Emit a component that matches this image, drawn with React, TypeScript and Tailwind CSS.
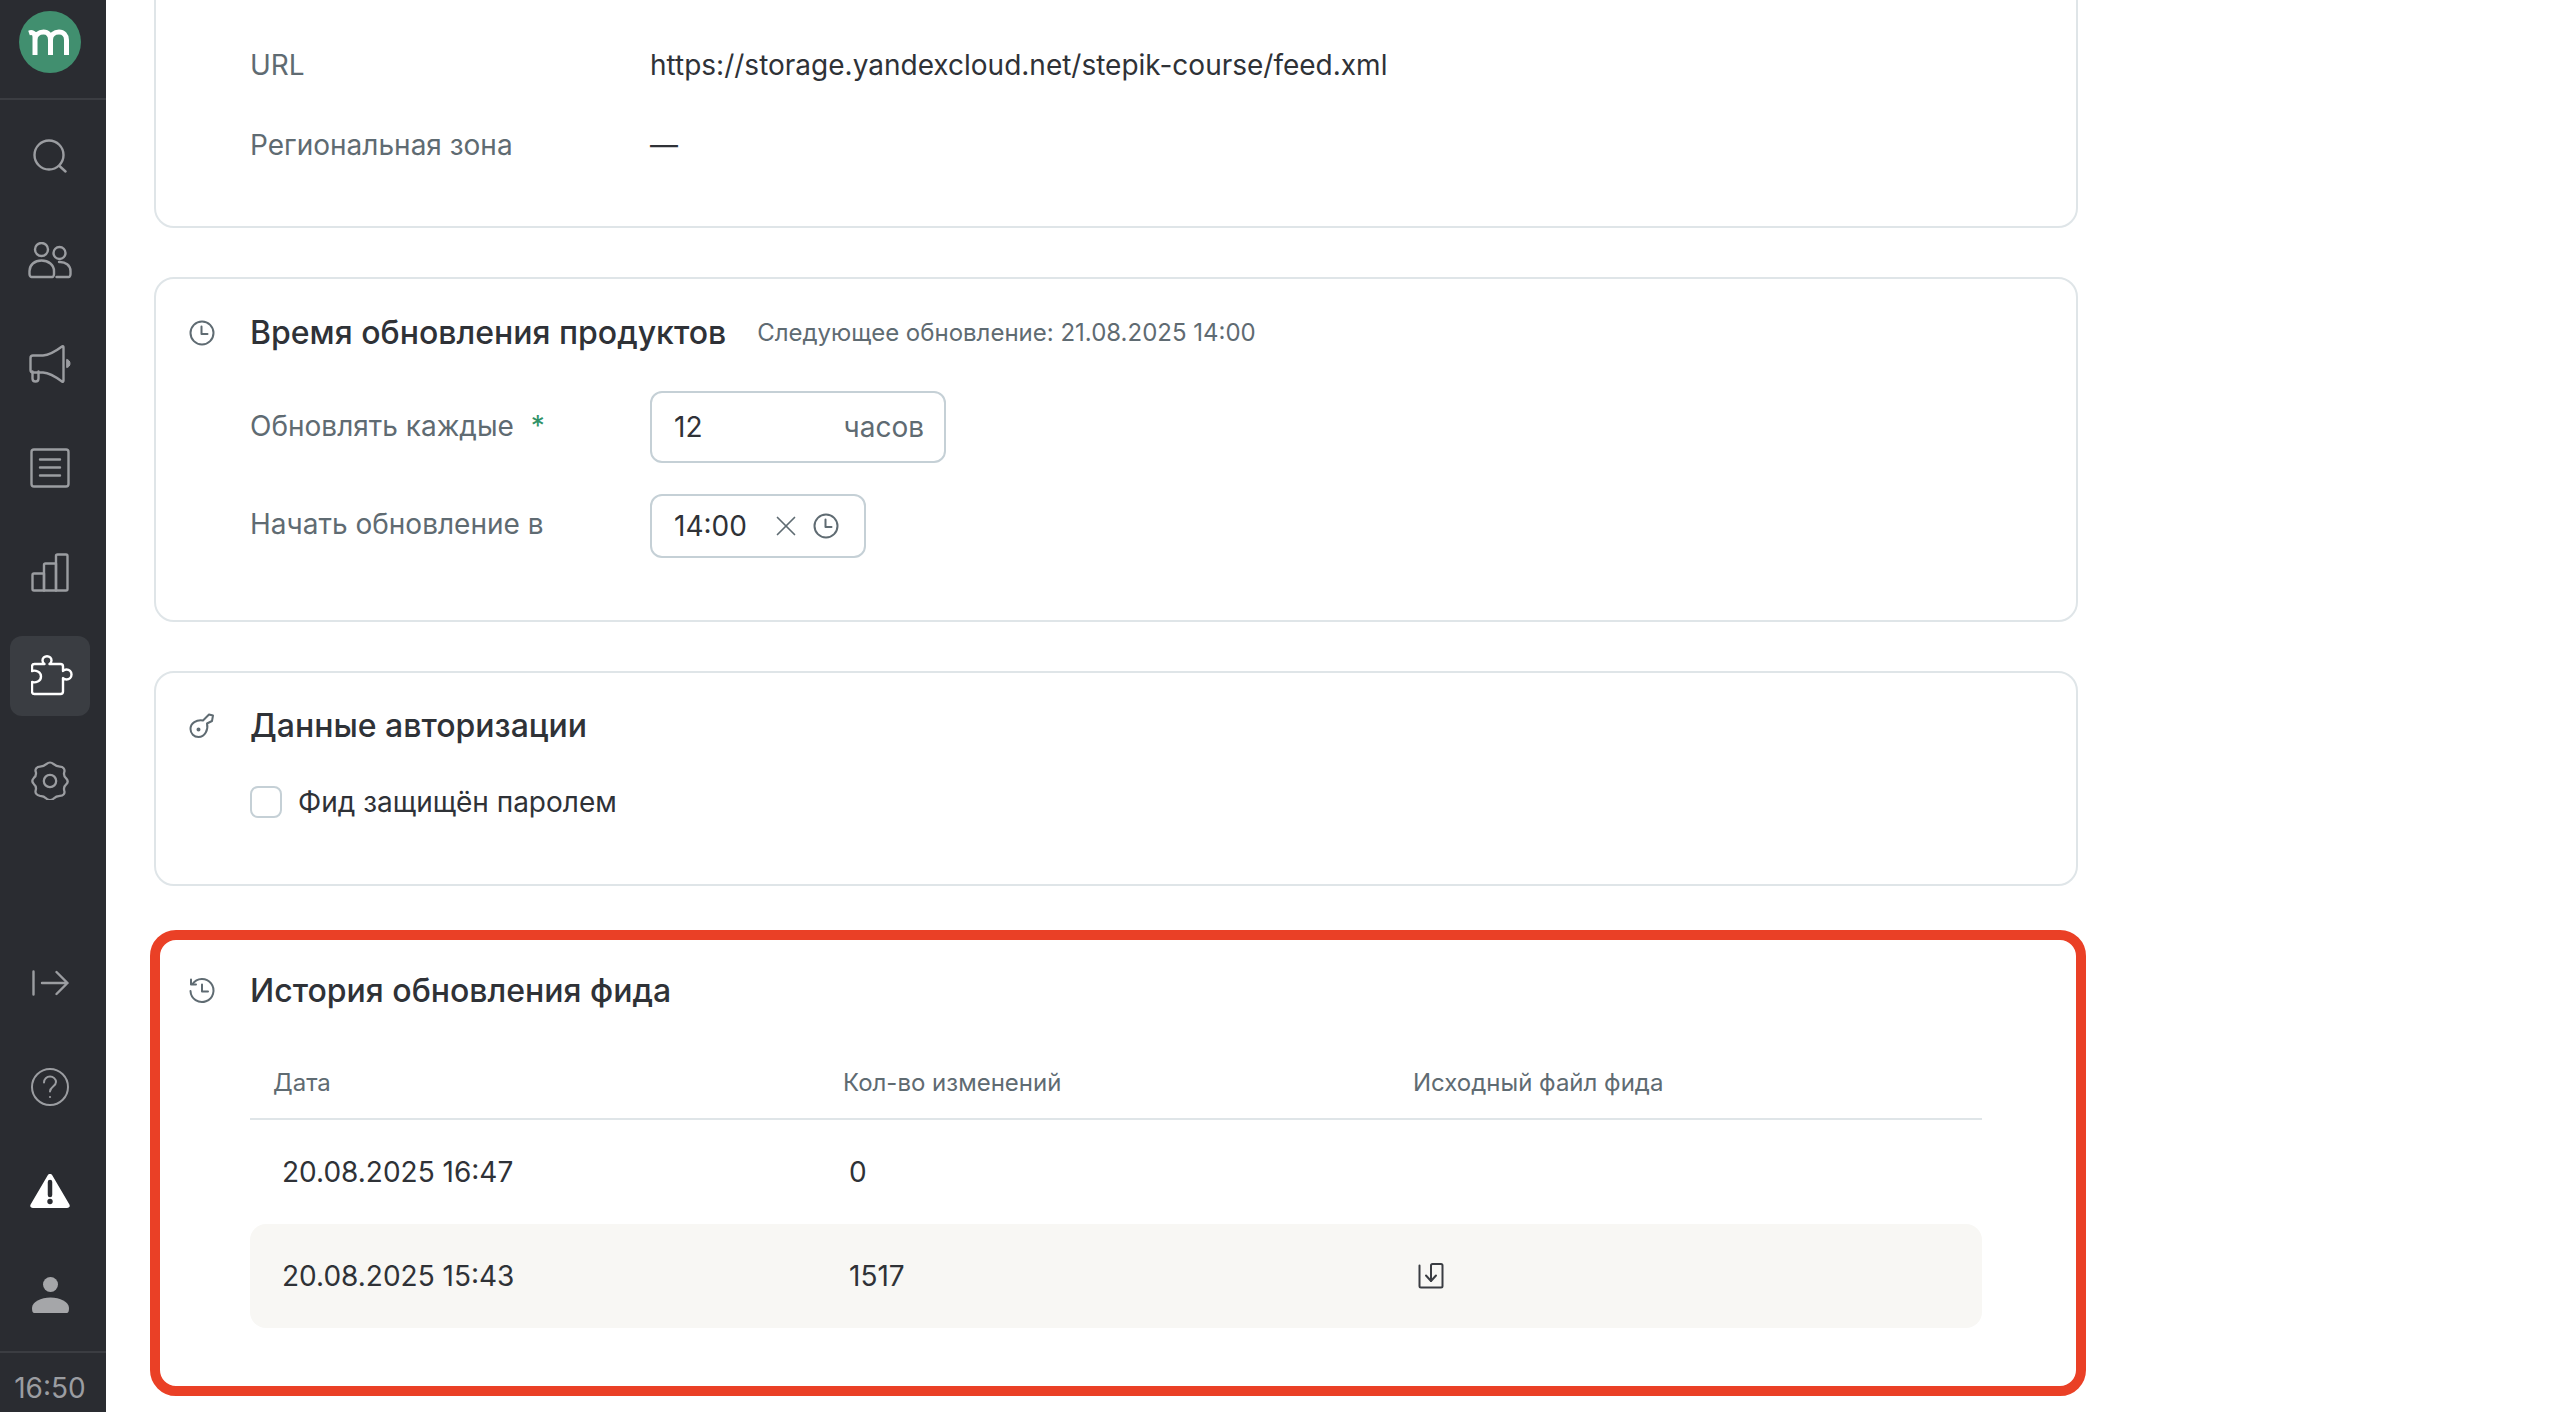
import type { ReactNode } from "react";
import { X } from "lucide-react";

const stroke = "#9b9da1";

const SearchIcon = () => (
  <svg width="34" height="34" viewBox="0 0 34 34" fill="none" stroke={stroke} strokeWidth="2.4" strokeLinecap="round">
    <circle cx="16" cy="16" r="14.5" />
    <path d="M26.5 27l6 5.500" />
  </svg>
);

const UsersIcon = () => (
  <svg width="44" height="37" viewBox="0 0 44 37" fill="none" stroke={stroke} strokeWidth="2.4" strokeLinejoin="round" strokeLinecap="round">
    <circle cx="13.500" cy="7.500" r="6.500" />
    <circle cx="31.500" cy="11" r="6" />
    <path d="M1.500 32v-3c0-6 5-10.500 12-10.500s12.500 4.500 12.500 10.500v3c0 1-.6 3-1.500 3h-21C2.100 35 1.500 33 1.500 32z" />
    <path d="M31 20c6.500-.5 11.500 3.500 11.500 9v3c0 1-.6 3-1.500 3H28.500" />
  </svg>
);

const MegaphoneIcon = () => (
  <svg width="42" height="38" viewBox="0 0 42 38" fill="none" stroke={stroke} strokeWidth="2.4" strokeLinejoin="round" strokeLinecap="round">
    <path d="M1.500 13c0-1.500 1-2.500 2.500-2.500h10C21 10 27 6 33 1.500c.8-.6 1.500-.2 1.500 1v33c0 1.200-.7 1.600-1.500 1-6-4.500-12-8.500-19-9H4c-1.500 0-2.500-1-2.500-2.500z" />
    <path d="M3.500 26.500v7c0 2 1.200 3 3 3s3-1 3-3v-7" />
    <path d="M38 14.500c2 .5 3 2 3 4s-1 3.500-3 4z" fill={stroke} strokeWidth="1" />
  </svg>
);

const ListIcon = () => (
  <svg width="40" height="40" viewBox="0 0 40 40" fill="none" stroke={stroke} strokeWidth="2.4" strokeLinecap="round">
    <rect x="1.500" y="1.500" width="37" height="37" rx="2.500" />
    <path d="M10 11.500h20M10 19.500h20M10 27.500h20" />
  </svg>
);

const ChartIcon = () => (
  <svg width="38" height="39" viewBox="0 0 38 39" fill="none" stroke={stroke} strokeWidth="2.400" strokeLinejoin="round">
    <path d="M13 37.500H3c-1 0-1.500-.6-1.500-1.500V22c0-1 .5-1.500 1.500-1.500h10z" />
    <path d="M13 37.500V12c0-1 .5-1.500 1.500-1.500H25v27z" />
    <path d="M25 37.500V3c0-1 .5-1.500 1.500-1.500H35c1 0 1.500.5 1.500 1.500v33c0 1-.5 1.500-1.500 1.500z" />
  </svg>
);

const PuzzleIcon = () => (
  <svg className="ml-[4px]" width="42" height="42" viewBox="0 0 42 42" fill="none" stroke="#fff" strokeWidth="2.400" strokeLinejoin="round">
    <path d="M3.500 9h10c-1.500-1-2-2.500-2-3.500 0-2.500 2-4.300 4.500-4.300s4.500 1.800 4.500 4.300c0 1-.5 2.500-2 3.500h11c1.500 0 2.500 1 2.500 2.500V16c1-1 2.300-1.500 3.500-1.500 2.700 0 5 2 5 5s-2.300 5-5 5c-1.200 0-2.500-.5-3.500-1.500v13.500c0 1.500-1 2.500-2.500 2.500H3.500C2 39 1 38 1 36.500V27c3.500 1 9-.5 9-5.500S4.500 15 1 16v-4.500C1 10 2 9 3.500 9z" />
  </svg>
);

const GearIcon = () => (
  <svg width="38" height="39" viewBox="0 0 40 41" fill="none" stroke={stroke} strokeWidth="2.400" strokeLinejoin="round">
    <path d="M16.500 3c2-1.800 5-1.800 7 0 2 1.800 4 2.800 7 2.800 3.500 0 5.500 3 4.500 6-.7 2.500 0 4.800 2 6.500 2 2 2 4.400 0 6.400-2 1.700-2.700 4-2 6.500 1 3-1 5.500-4.500 5.500-3 0-5 1-7 3-2 1.800-5 1.800-7 0-2-2-4-3-7-3C6 36.200 4 33.700 5 30.700c.7-2.500 0-4.800-2-6.500-2-2-2-4.400 0-6.400 2-1.700 2.700-4 2-6.500C4 8.800 6 5.800 9.500 5.800c3 0 5-1 7-2.800z" />
    <circle cx="20" cy="21" r="6.500" />
  </svg>
);

const ExitIcon = () => (
  <svg width="37" height="26" viewBox="0 0 37 26" fill="none" stroke={stroke} strokeWidth="2.400" strokeLinecap="round" strokeLinejoin="round">
    <path d="M1.500 1.500v23M10 13h25.500M24.500 2l11 11-11 11" />
  </svg>
);

const HelpIcon = () => (
  <svg width="38" height="38" viewBox="0 0 38 38" fill="none" stroke={stroke} strokeWidth="2" strokeLinecap="round">
    <circle cx="19" cy="19" r="18" />
    <path d="M13 14.500c0-3.500 2.700-6 6-6s6 2.500 6 5.500c0 4.500-6 4.500-6 9.500" />
    <circle cx="19" cy="29" r="1.100" fill={stroke} stroke="none" />
  </svg>
);

const WarnIcon = () => (
  <svg width="40" height="34" viewBox="0 0 40 34" fill="none">
    <path d="M17.600 1.500c1.100-1.900 3.700-1.900 4.800 0l17 29c1 1.800-.2 3.500-2.400 3.500H3c-2.200 0-3.400-1.700-2.400-3.500z" fill="#fff" />
    <path d="M20 8v13" stroke="#2a2c31" strokeWidth="4.500" strokeLinecap="round" />
    <circle cx="20" cy="27.500" r="2.700" fill="#2a2c31" />
  </svg>
);

const PersonIcon = () => (
  <svg width="37" height="36" viewBox="0 0 37 36" fill="#a5a6a9">
    <circle cx="18.500" cy="7.500" r="7.500" />
    <path d="M0 31c0-6 9-10.500 18.500-10.500S37 25 37 31c0 3-.5 5-2.500 5h-32C.5 36 0 34 0 31z" />
  </svg>
);

const ClockIcon = ({ size = 26 }: { size?: number }) => (
  <svg width={size} height={size} viewBox="0 0 26 26" fill="none" stroke="#5f6b72" strokeWidth="2" strokeLinecap="round" strokeLinejoin="round">
    <circle cx="13" cy="13" r="11.500" />
    <path d="M12.500 6.500v7.500h6" />
  </svg>
);

const KeyIcon = () => (
  <svg width="26" height="26" viewBox="0 0 26 26" fill="none" stroke="#5f6b72" strokeWidth="2" strokeLinejoin="round" strokeLinecap="round">
    <path d="M14 7.500L20 1.500l4 1-1 5.500-5 2.500c1.500 6-2 13.500-8.500 13.500C5 24 1.500 20.500 1.500 16c0-6 6-9.500 12.500-8.500z" />
    <circle cx="9.500" cy="16.500" r="1" fill="#5f6b72" />
  </svg>
);

const HistoryIcon = () => (
  <svg width="28" height="28" viewBox="0 0 28 28" fill="none" stroke="#5f6b72" strokeWidth="2" strokeLinecap="round" strokeLinejoin="round">
    <path d="M4.500 7A11.500 11.500 0 1 1 2.500 14" />
    <path d="M3 2.500V7.500h5" />
    <path d="M14 7.500v7h6" />
  </svg>
);

const FileDownIcon = () => (
  <svg width="26" height="26" viewBox="0 0 26 26" fill="none" stroke="#3a3d42" strokeWidth="2" strokeLinecap="round" strokeLinejoin="round">
    <path d="M1.500 2.500V23c0 1 .5 1.500 1.500 1.500h20c1 0 1.500-.5 1.500-1.500V2.500c0-1-.5-1.500-1.500-1.500h-8.500c-1 0-1.500.5-1.500 1.500V18" />
    <path d="M8 12.500l5 5.500 5-5.500" />
  </svg>
);

const navTop = [
  { icon: <SearchIcon /> },
  { icon: <UsersIcon /> },
  { icon: <MegaphoneIcon /> },
  { icon: <ListIcon /> },
  { icon: <ChartIcon /> },
  { icon: <PuzzleIcon />, active: true },
  { icon: <GearIcon /> },
];

const navBottom = [<ExitIcon />, <HelpIcon />, <WarnIcon />, <PersonIcon />];

function Sidebar() {
  return (
    <aside className="flex h-full w-[106px] shrink-0 flex-col bg-[#2a2c31]">
      <div className="flex h-[100px] shrink-0 items-center justify-center border-b-2 border-[#3b3d42] pb-[14px] pr-[6px]">
        <svg width="62" height="62" viewBox="0 0 62 62" fill="none">
          <circle cx="31" cy="31" r="31" fill="#418f6f" />
          <path d="M10 22c3-1 6 0 6 4v18M16 29c0-5 4-8 8.500-8s7 3 7 8v15M31.500 29c0-5 4-8 8.500-8s7.500 3 7.500 8v15" stroke="#fff" strokeWidth="5" />
        </svg>
      </div>
      <nav className="flex flex-col items-center pr-[6px] pt-[4px]">
        {navTop.map((item, i) => (
          <div key={i} className="flex h-[104px] w-full items-center justify-center">
            <div className={`flex h-[80px] w-[80px] items-center justify-center rounded-[12px] ${item.active ? "bg-[#3a3d42]" : ""}`}>
              {item.icon}
            </div>
          </div>
        ))}
      </nav>
      <div className="mt-auto flex flex-col items-center pb-[4px] pr-[6px]">
        {navBottom.map((icon, i) => (
          <div key={i} className="flex h-[104px] w-full items-center justify-center">
            {icon}
          </div>
        ))}
      </div>
      <div className="flex h-[61px] items-center justify-center border-t-2 border-[#3b3d42] pr-[6px] pt-[10px] text-[28px] text-[#9b9da1]">
        16:50
      </div>
    </aside>
  );
}

function Label({ children, className = "" }: { children: ReactNode; className?: string }) {
  return <div className={`w-[400px] shrink-0 text-[28px] text-[#5f6b72] ${className}`}>{children}</div>;
}

function SectionTitle({ icon, title, note }: { icon: ReactNode; title: string; note?: string }) {
  return (
    <div className="flex items-center">
      <div className="mr-[2px] flex w-[92px] shrink-0 justify-center">{icon}</div>
      <h2 className="text-[32px] font-medium text-[#2f3237]">{title}</h2>
      {note && <span className="ml-[31px] text-[24px] text-[#5f6b72]">{note}</span>}
    </div>
  );
}

export default function App() {
  return (
    <div className="flex h-[1412px] w-full overflow-hidden bg-white font-['Inter',sans-serif] text-[#2f3237]">
      <Sidebar />
      <main className="flex-1 pl-[48px]">
        <div className="-mt-[30px] flex w-[1924px] flex-col gap-[49px]">
          <section className="rounded-[20px] border-2 border-[#dfe5e8] pb-[60px] pl-[94px] pt-[72px]">
            <div className="flex items-center text-[28px]">
              <Label>URL</Label>
              <span>https://storage.yandexcloud.net/stepik-course/feed.xml</span>
            </div>
            <div className="mt-[38px] flex items-center text-[28px]">
              <Label>Региональная зона</Label>
              <span>—</span>
            </div>
          </section>

          <section className="rounded-[20px] border-2 border-[#dfe5e8] pb-[62px] pt-[30px]">
            <SectionTitle
              icon={<ClockIcon />}
              title="Время обновления продуктов"
              note="Следующее обновление: 21.08.2025 14:00"
            />
            <div className="mt-[34px] flex items-center pl-[94px]">
              <Label className="pb-[3px]">
                Обновлять каждые <span className="ml-[9px] text-[#2f9268]">*</span>
              </Label>
              <div className="flex h-[72px] w-[296px] items-center justify-between rounded-[12px] border-2 border-[#c5d0d6] pl-[22px] pr-[20px] text-[28px]">
                <span>12</span>
                <span className="text-[#5f6b72]">часов</span>
              </div>
            </div>
            <div className="mt-[31px] flex items-center pl-[94px]">
              <Label className="pb-[5px]">Начать обновление в</Label>
              <div className="flex h-[64px] w-[216px] items-center rounded-[12px] border-2 border-[#c5d0d6] pl-[22px] text-[28px]">
                <span>14:00</span>
                <X className="ml-[22px] h-[34px] w-[34px] text-[#5f6b72]" strokeWidth={1.2} />
                <span className="ml-[10px] flex">
                  <ClockIcon />
                </span>
              </div>
            </div>
          </section>

          <section className="rounded-[20px] border-2 border-[#dfe5e8] pb-[61px] pt-[29px]">
            <SectionTitle icon={<KeyIcon />} title="Данные авторизации" />
            <label className="mt-[31px] flex items-center pl-[94px] text-[28px]">
              <span className="h-[32px] w-[32px] rounded-[8px] border-2 border-[#c5d0d6]" />
              <span className="ml-[16px]">Фид защищён паролем</span>
            </label>
          </section>

          <section className="relative rounded-[20px] border-2 border-[#dfe5e8] pb-[62px] pt-[30px]">
            <div className="absolute -left-[6px] -right-[10px] -top-[7px] h-[466px] rounded-[26px] border-[10px] border-[#ea4026]" />
            <SectionTitle icon={<HistoryIcon />} title="История обновления фида" />
            <div className="ml-[94px] mr-[94px] mt-[33px]">
              <div className="grid h-[72px] grid-cols-[569px_570px_1fr] items-center border-b-2 border-[#dfe5e8] pl-[24px] text-[24px] text-[#5f6b72]">
                <span className="-ml-[1px]">Дата</span>
                <span>Кол-во изменений</span>
                <span>Исходный файл фида</span>
              </div>
              <div className="grid h-[104px] grid-cols-[567px_569px_1fr] items-center pl-[32px] text-[28px]">
                <span>20.08.2025 16:47</span>
                <span>0</span>
                <span />
              </div>
              <div className="grid h-[104px] grid-cols-[567px_569px_1fr] items-center rounded-[16px] bg-[#f8f7f4] pl-[32px] text-[28px]">
                <span>20.08.2025 15:43</span>
                <span>1517</span>
                <span className="flex">
                  <FileDownIcon />
                </span>
              </div>
            </div>
          </section>
        </div>
      </main>
    </div>
  );
}
